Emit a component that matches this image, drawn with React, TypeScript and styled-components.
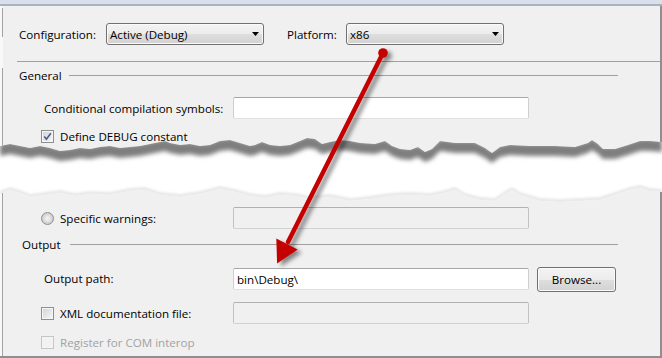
import React from "react";
import styled, { createGlobalStyle } from "styled-components";

const GlobalStyle = createGlobalStyle`
  html, body { margin: 0; padding: 0; background: #ffffff; }
  body { font-family: "Open Sans", "Noto Sans", sans-serif; }
`;

const Frame = styled.div`
  position: relative;
  width: 662px;
  height: 358px;
  overflow: hidden;
  display: flex;
  flex-direction: column;
  background: #f0f0f0;
  font-family: "Open Sans", "Noto Sans", "DejaVu Sans", sans-serif;
  font-size: 11.6px;
  color: #000;
`;

const TopStrip = styled.div`
  flex: none;
  height: 4px;
  background: #d9e0ea;
  border-bottom: 2px solid #a8b2c0;
`;

const Section = styled.div<{ $fill?: boolean }>`
  display: flex;
  flex: ${(p) => (p.$fill ? "1" : "none")};
  border-right: 2px solid #8f8f8f;
  border-bottom: ${(p) => (p.$fill ? "2px solid #8f8f8f" : "none")};
`;

const Rail = styled.div<{ $gapFrom?: number; $gapTo?: number }>`
  flex: none;
  width: 3px;
  background: ${(p) =>
      p.$gapFrom !== undefined
        ? `linear-gradient(to bottom, transparent 2px, #a3a3a3 2px, #a3a3a3 ${p.$gapFrom}px, transparent ${p.$gapFrom}px, transparent ${p.$gapTo}px, #a3a3a3 ${p.$gapTo}px)`
        : "linear-gradient(#a3a3a3, #a3a3a3)"}
    right top / 1px 100% no-repeat,
    #f8f8f8;
`;

const Content = styled.div<{ $padBottom?: number }>`
  flex: 1;
  display: flex;
  flex-direction: column;
  padding-bottom: ${(p) => p.$padBottom ?? 0}px;
`;

const ConfigRow = styled.div`
  display: flex;
  align-items: center;
  height: 22px;
  margin-top: 17px;
  padding-left: 16px;
`;

const ConfigLabel = styled.span<{ $w: number; $ml?: number }>`
  width: ${(p) => p.$w}px;
  margin-left: ${(p) => p.$ml ?? 0}px;
  flex: none;
  white-space: nowrap;
`;

const Combo = styled.div`
  box-sizing: border-box;
  width: 158px;
  height: 22px;
  flex: none;
  display: flex;
  align-items: center;
  justify-content: space-between;
  padding: 0 4px 0 3px;
  border: 1px solid #707070;
  border-radius: 3px;
  box-shadow: inset 0 0 0 1px #fbfbfb;
  background: linear-gradient(to bottom, #f3f3f3 0%, #ececec 50%, #dedede 51%, #d2d2d2 100%);
  white-space: nowrap;
`;

const Divider = styled.div`
  height: 1px;
  margin: 16px 0 0 14px;
  background: #a0a0a0;
`;

const GroupHeader = styled.div<{ $mt: number; $indent: number }>`
  display: flex;
  align-items: center;
  height: 14px;
  margin-top: ${(p) => p.$mt}px;
  padding-left: ${(p) => p.$indent}px;
  padding-right: 42px;
`;

const GroupTitle = styled.span<{ $w: number }>`
  width: ${(p) => p.$w}px;
  flex: none;
  white-space: nowrap;
`;

const GroupRule = styled.div`
  flex: 1;
  height: 1px;
  background: #a0a0a0;
`;

const Row = styled.div<{ $mt: number; $h: number; $top?: boolean }>`
  display: flex;
  align-items: ${(p) => (p.$top ? "flex-start" : "center")};
  height: ${(p) => p.$h}px;
  margin-top: ${(p) => p.$mt}px;
  padding-left: 38px;
`;

const LabelCell = styled.div<{ $plain?: boolean; $disabled?: boolean; $h?: number }>`
  width: 192px;
  height: ${(p) => p.$h ?? 22}px;
  flex: none;
  display: flex;
  align-items: center;
  gap: 6px;
  padding-left: ${(p) => (p.$plain ? 3 : 0)}px;
  box-sizing: border-box;
  white-space: nowrap;
  color: ${(p) => (p.$disabled ? "#a2a2a2" : "#000")};
`;

const TextBox = styled.div<{ $disabled?: boolean; $mt?: number }>`
  box-sizing: border-box;
  width: 296px;
  height: 22px;
  flex: none;
  margin-top: ${(p) => p.$mt ?? 0}px;
  display: flex;
  align-items: center;
  padding-left: 3px;
  border: 1px solid;
  border-color: ${(p) =>
    p.$disabled ? "#b1b1b1 #c2c2c2 #d2d2d2 #c2c2c2" : "#a6a6a6 #cfcfcf #e0e0e0 #cfcfcf"};
  border-radius: 2px;
  background: ${(p) => (p.$disabled ? "#f0f0f0" : "#ffffff")};
  white-space: nowrap;
`;

const Button = styled.div`
  box-sizing: border-box;
  width: 79px;
  height: 25px;
  flex: none;
  margin-left: 8px;
  display: flex;
  align-items: center;
  justify-content: center;
  border: 1px solid #707070;
  border-radius: 3px;
  box-shadow: inset 0 0 0 1px #fbfbfb;
  background: linear-gradient(to bottom, #f3f3f3 0%, #ececec 50%, #dedede 51%, #d2d2d2 100%);
`;

const Box = styled.span<{ $disabled?: boolean }>`
  box-sizing: border-box;
  width: 13px;
  height: 13px;
  flex: none;
  display: flex;
  align-items: center;
  justify-content: center;
  border: 1px solid ${(p) => (p.$disabled ? "#c6c6c6" : "#8e8f8f")};
  box-shadow: inset 0 0 0 1px ${(p) => (p.$disabled ? "#f4f4f4" : "#f6f6f6")};
  background: ${(p) =>
    p.$disabled
      ? "#f2f2f2"
      : "linear-gradient(135deg, #cfd2d6 0%, #e6e7e9 55%, #f8f8f8 100%)"};
`;

const Radio = styled.span`
  box-sizing: border-box;
  width: 13px;
  height: 13px;
  flex: none;
  border-radius: 50%;
  border: 1px solid #8e8f8f;
  background: radial-gradient(circle at 50% 50%, #f6f6f6 0%, #e3e3e3 35%, #c9c9c9 75%, #e9e9e9 100%);
`;

const TearSvg = styled.svg`
  display: block;
  flex: none;
  position: relative;
  z-index: 1;
  width: 662px;
  height: 68px;
  margin: -19px 0 -18px 0;
`;

const Overlay = styled.svg`
  position: absolute;
  left: 0;
  top: 0;
  z-index: 2;
  width: 662px;
  height: 358px;
  pointer-events: none;
`;

const TEAR_TOP = 136;

const topEdge: [number, number][] = [
  [0, 146], [10, 144], [20, 146], [30, 148], [40, 146], [50, 148], [60, 151], [70, 150],
  [80, 148], [90, 149], [100, 147], [110, 146], [120, 148], [130, 147], [140, 146],
  [150, 144], [160, 142], [165, 141], [170, 143], [180, 145], [190, 144], [200, 146],
  [210, 145], [220, 141], [230, 140], [240, 143], [250, 146], [255, 145], [262, 142],
  [270, 145], [280, 146], [290, 145], [300, 141], [307, 138], [315, 139], [322, 144],
  [330, 142], [340, 140], [350, 141], [360, 143], [375, 144], [385, 141], [392, 146],
  [400, 149], [410, 150], [418, 147], [425, 152], [432, 149], [440, 141], [455, 143],
  [475, 143], [485, 148], [492, 153], [500, 147], [510, 145], [530, 146], [555, 146],
  [575, 147], [588, 143], [592, 140], [598, 144], [603, 149], [615, 149], [628, 145],
  [640, 141], [650, 141], [662, 142],
];

const bottomEdge: [number, number][] = [
  [0, 194], [10, 190], [20, 193], [30, 197], [45, 195], [60, 193], [75, 196], [90, 194],
  [110, 195], [130, 191], [145, 190], [160, 195], [180, 197], [200, 194], [220, 189],
  [235, 192], [250, 196], [265, 198], [280, 195], [295, 196], [310, 199], [330, 197],
  [350, 201], [370, 199], [390, 196], [410, 195], [430, 196], [445, 193], [455, 190],
  [465, 196], [480, 200], [495, 201], [505, 194], [512, 190], [520, 195], [540, 201],
  [560, 202], [580, 201], [600, 200], [615, 195], [630, 190], [640, 188], [650, 191],
  [662, 192],
];

const pts = (arr: [number, number][], dy = 0) =>
  arr.map(([x, y]) => `${x},${y - TEAR_TOP + dy}`).join(" L");
const rev = (arr: [number, number][]) => [...arr].reverse();

const bandPath = `M${pts(topEdge)} L${pts(rev(bottomEdge))} Z`;
const shadowPath = `M${pts(topEdge, -2)} L${pts(rev(topEdge), 10)} Z`;
const fringePath = `M${pts(bottomEdge, -3)} L${pts(rev(bottomEdge), 1)} Z`;

function Tear() {
  return (
    <TearSvg viewBox="0 0 662 68">
      <defs>
        <clipPath id="bandClip">
          <path d={bandPath} />
        </clipPath>
        <filter id="soft" x="-5%" y="-50%" width="110%" height="200%">
          <feGaussianBlur stdDeviation="2" />
        </filter>
        <filter id="softer" x="-5%" y="-50%" width="110%" height="200%">
          <feGaussianBlur stdDeviation="0.9" />
        </filter>
      </defs>
      <path d={bandPath} fill="#ffffff" />
      <g clipPath="url(#bandClip)">
        <path d={shadowPath} fill="#7e7e7e" filter="url(#soft)" />
        <path d={fringePath} fill="#e8e8e8" filter="url(#softer)" />
      </g>
    </TearSvg>
  );
}

function Arrow() {
  return (
    <Overlay viewBox="0 0 662 358">
      <defs>
        <filter id="arrowShadow" x="-20%" y="-10%" width="140%" height="120%">
          <feDropShadow dx="4" dy="3" stdDeviation="2" floodColor="#000" floodOpacity="0.45" />
        </filter>
      </defs>
      <g filter="url(#arrowShadow)" fill="#c40000" stroke="#c40000">
        <line x1="383" y1="53" x2="288" y2="242" strokeWidth="4.5" strokeLinecap="round" />
        <circle cx="383" cy="53" r="4.8" stroke="none" />
        <polygon points="276.3,238.4 297.7,249.4 277.1,263.6" stroke="none" />
      </g>
    </Overlay>
  );
}

function DropArrow() {
  return (
    <svg width="7" height="4" viewBox="0 0 7 4">
      <polygon points="0,0 7,0 3.5,4" fill="#000" />
    </svg>
  );
}

function Check() {
  return (
    <svg width="9" height="9" viewBox="0 0 9 9">
      <path d="M1.3 4.6 L3.4 7.2 L7.8 1.2" fill="none" stroke="#4a5d8a" strokeWidth="1.6" />
    </svg>
  );
}

export default function App() {
  return (
    <>
      <GlobalStyle />
      <Frame>
        <TopStrip />
        <Section>
          <Rail $gapFrom={31} $gapTo={62} />
          <Content $padBottom={12}>
            <ConfigRow>
              <ConfigLabel $w={87}>Configuration:</ConfigLabel>
              <Combo>
                <span>Active (Debug)</span>
                <DropArrow />
              </Combo>
              <ConfigLabel $w={59} $ml={23}>Platform:</ConfigLabel>
              <Combo>
                <span>x86</span>
                <DropArrow />
              </Combo>
            </ConfigRow>
            <Divider />
            <GroupHeader $mt={6} $indent={16}>
              <GroupTitle $w={50}>General</GroupTitle>
              <GroupRule />
            </GroupHeader>
            <Row $mt={15} $h={22}>
              <LabelCell $plain>Conditional compilation symbols:</LabelCell>
              <TextBox />
            </Row>
            <Row $mt={11} $h={13}>
              <LabelCell $h={13}>
                <Box>
                  <Check />
                </Box>
                Define DEBUG constant
              </LabelCell>
            </Row>
          </Content>
        </Section>
        <Tear />
        <Section $fill>
          <Rail />
          <Content>
            <Row $mt={21} $h={22}>
              <LabelCell>
                <Radio />
                Specific warnings:
              </LabelCell>
              <TextBox $disabled />
            </Row>
            <GroupHeader $mt={8} $indent={19}>
              <GroupTitle $w={48}>Output</GroupTitle>
              <GroupRule />
            </GroupHeader>
            <Row $mt={16} $h={25} $top>
              <LabelCell $plain>Output path:</LabelCell>
              <TextBox $mt={1}>bin\Debug\</TextBox>
              <Button>Browse...</Button>
            </Row>
            <Row $mt={10} $h={22}>
              <LabelCell>
                <Box />
                XML documentation file:
              </LabelCell>
              <TextBox $disabled />
            </Row>
            <Row $mt={12} $h={13}>
              <LabelCell $h={13} $disabled>
                <Box $disabled />
                Register for COM interop
              </LabelCell>
            </Row>
          </Content>
        </Section>
        <Arrow />
      </Frame>
    </>
  );
}
